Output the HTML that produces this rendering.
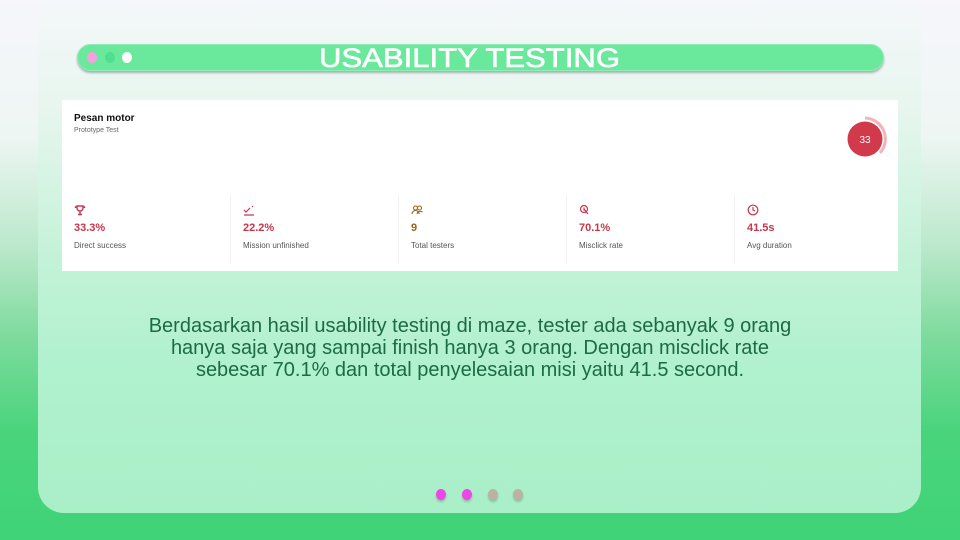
<!DOCTYPE html>
<html><head><meta charset="utf-8"><style>
*{margin:0;padding:0;box-sizing:border-box}
body{width:960px;height:540px;overflow:hidden;position:relative;font-family:"Liberation Sans",sans-serif;
background:linear-gradient(180deg,#f6f6fb 0%,#eef6f3 25%,#bde9cd 45%,#7fdb9e 62%,#49d47b 80%,#40d377 100%)}
.panel{position:absolute;left:38px;top:0;width:883px;height:513px;border-radius:0 0 26px 26px;
background:linear-gradient(180deg,#f5f7fa 0%,#e8f6ef 20%,#c4f2d8 50%,#b1f1cf 70%,#a9efc8 100%)}
.bar{position:absolute;left:77px;top:44px;width:807px;height:27px;border-radius:14px;background:#6ae89c;
box-shadow:0 2px 2px rgba(80,90,100,.45), inset 0 0 0 1px rgba(255,255,255,.25)}
.dot{position:absolute;top:52px;width:10px;height:11px;border-radius:50%}
.card{position:absolute;left:62px;top:100px;width:836px;height:171px;background:#fff}
.t1{position:absolute;left:12px;top:13px;font-size:10px;font-weight:bold;color:#111}
.t2{position:absolute;left:12px;top:27px;font-size:7px;color:#666}
.col{position:absolute;top:95px;width:168px;height:68px;border-left:1px solid #f1f3f3}
.col svg{position:absolute;left:12px;top:9px}
.v{position:absolute;left:12px;top:27px;font-size:11px;font-weight:bold;color:#c8364a}
.l{position:absolute;left:12px;top:46px;font-size:8px;color:#555}
.para{position:absolute;left:80px;top:315px;width:780px;text-align:center;font-size:20px;line-height:22px;color:#1d6b45}
.pg{position:absolute;top:489px;width:10px;height:11px;border-radius:50%;box-shadow:0 2px 2px rgba(0,0,0,.2)}
</style></head><body>
<div class="panel"></div>
<div class="bar"></div>
<div class="dot" style="left:87px;background:#f7a0e0"></div>
<div class="dot" style="left:105px;background:#4de08e"></div>
<div class="dot" style="left:122px;background:#fff"></div>
<svg style="position:absolute;left:0;top:0" width="960" height="100"><text x="319" y="67" textLength="301" lengthAdjust="spacingAndGlyphs" font-family="Liberation Sans" font-size="27" fill="#fff" stroke="#fff" stroke-width="0.6">USABILITY TESTING</text></svg>
<div class="card">
<div class="t1">Pesan motor</div>
<div class="t2">Prototype Test</div>
<svg style="position:absolute;left:780px;top:14px" width="50" height="50">
<path d="M23 4 A21 21 0 0 1 38 39" fill="none" stroke="#f2b3bb" stroke-width="3"/>
<circle cx="23" cy="25" r="17.5" fill="#d03a4b"/>
<text x="23" y="29" text-anchor="middle" font-size="10" fill="#fff" font-family="Liberation Sans">33</text></svg>
<div class="col" style="left:0;border-left:none">
<svg width="12" height="12" viewBox="0 0 12 12" fill="none" stroke="#c8364a" stroke-width="1.4"><path d="M3 2h6v2a3 3 0 0 1-6 0zM6 7v3M4 10.5h4M3 3H1.5v1M9 3h1.5v1"/></svg>
<div class="v">33.3%</div><div class="l">Direct success</div></div>
<div class="col" style="left:168px">
<svg width="12" height="12" viewBox="0 0 12 12" fill="none" stroke="#c8364a" stroke-width="1.2"><path d="M1 6l2 2 4-4M9 3l1-1M1 11h10"/></svg>
<div class="v">22.2%</div><div class="l">Mission unfinished</div></div>
<div class="col" style="left:336px">
<svg width="12" height="12" viewBox="0 0 12 12" fill="none" stroke="#a0621a" stroke-width="1.1"><circle cx="4.5" cy="4" r="2"/><circle cx="8.5" cy="4" r="2"/><path d="M1 10a3.5 3.5 0 0 1 7 0M6 10a3.5 3.5 0 0 1 5.5-2"/></svg>
<div class="v" style="color:#a0621a">9</div><div class="l">Total testers</div></div>
<div class="col" style="left:504px">
<svg width="12" height="12" viewBox="0 0 12 12" fill="none" stroke="#c8364a" stroke-width="1.2"><circle cx="5" cy="5" r="3.5"/><path d="M5 5l4 5M5 3.5v3"/></svg>
<div class="v">70.1%</div><div class="l">Misclick rate</div></div>
<div class="col" style="left:672px">
<svg width="12" height="12" viewBox="0 0 12 12" fill="none" stroke="#c8364a" stroke-width="1.2"><circle cx="6" cy="6" r="4.8"/><path d="M6 3v3l2 1"/></svg>
<div class="v">41.5s</div><div class="l">Avg duration</div></div>
</div>
<div class="para">Berdasarkan hasil usability testing di maze, tester ada sebanyak 9 orang<br>hanya saja yang sampai finish hanya 3 orang. Dengan misclick rate<br>sebesar 70.1% dan total penyelesaian misi yaitu 41.5 second.</div>
<div class="pg" style="left:436px;background:#ee44ea"></div>
<div class="pg" style="left:462px;background:#ee44ea"></div>
<div class="pg" style="left:488px;background:#bdb1a4"></div>
<div class="pg" style="left:513px;background:#bdb1a4"></div>
</body></html>
